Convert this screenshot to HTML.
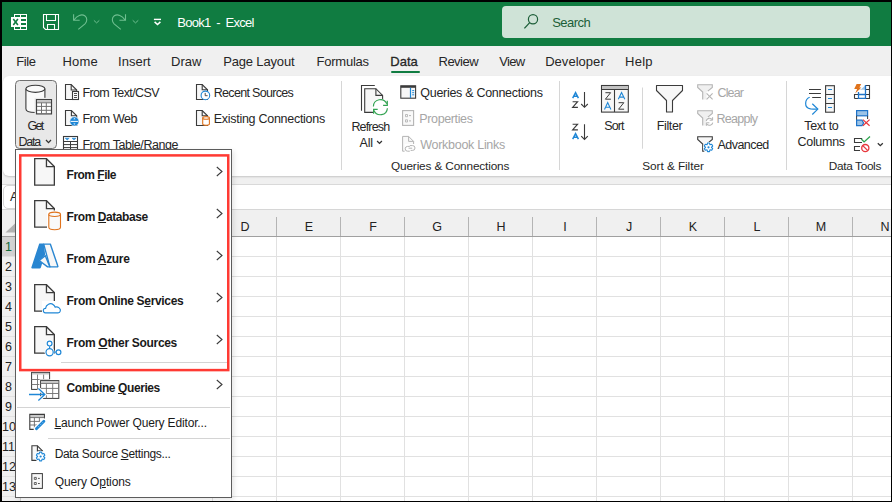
<!DOCTYPE html>
<html><head><meta charset="utf-8"><style>
*{margin:0;padding:0;box-sizing:border-box}
html,body{width:892px;height:502px;overflow:hidden;background:#fff}
body{position:relative;font-family:"Liberation Sans",sans-serif}
.a{position:absolute}
.t{position:absolute;white-space:pre;line-height:1;z-index:3}
.t u{text-decoration:underline;text-underline-offset:0.5px;text-decoration-thickness:1px}
.ch{position:absolute;top:214px;margin-left:1px;width:64px;height:27px;text-align:center;font-size:12.5px;line-height:27px;color:#222}
.vl{position:absolute;top:237px;width:1px;height:270px;background:#e1e1e1}
.hs{position:absolute;top:217px;width:1px;height:19px;background:#b4b4b4}
.hl{position:absolute;left:2px;width:890px;height:1px;background:#e1e1e1}
.rh{position:absolute;left:2px;width:13px;height:19px;font-size:12.5px;line-height:20px;text-align:center;color:#222}
.rh.sel{color:#0f6b39}
.rhc{position:absolute;left:2px;top:237px;width:18px;height:270px;background:#f0f0f0}
.gsep{position:absolute;top:81px;width:1px;height:89px;background:#d6d6d6}
#menu{position:absolute;left:15px;top:149px;width:217px;height:349px;background:#fff;border:1px solid #5c5c5c;z-index:10;box-shadow:2px 2px 5px rgba(0,0,0,0.10)}
#msvg{position:absolute;left:0;top:0;z-index:11}
.mt .t{z-index:12}
.msep{position:absolute;height:1px;background:#d4d4d4;z-index:11}
#red{position:absolute;left:19px;top:154px;width:211px;height:218px;border:2px solid #ff3535;box-shadow:inset 0 0 0 1px rgba(255,70,70,0.45);z-index:13}
.bd{position:absolute;background:#000;z-index:30}
</style></head><body>
<div class="a" style="left:0;top:0;width:892px;height:46px;background:#107c41"></div>
<div class="a" style="left:502px;top:6px;width:368px;height:32px;background:#cfe3d7;border-radius:4px"></div>
<div class="a" style="left:0;top:46px;width:892px;height:139px;background:#f0f0f0"></div>
<div class="a" style="left:391px;top:71px;width:29px;height:2px;background:#107c41;border-radius:1px"></div>
<div class="a" style="left:3px;top:76px;width:900px;height:100px;background:#fff;border-radius:6px 0 0 6px;box-shadow:0 1px 2px rgba(0,0,0,0.18)"></div>
<div class="a" style="left:0;top:184px;width:892px;height:1px;background:#d9d9d9"></div>
<div class="a" style="left:0;top:185px;width:892px;height:24px;background:#fff"></div>
<div class="a" style="left:3px;top:185px;width:60px;height:24px;border:1px solid #d6d6d6;border-radius:5px;background:#fff"></div>
<div class="a" style="left:10px;top:190px;font-size:12.5px;line-height:14px;color:#222">A1</div>
<div class="a" style="left:0;top:209px;width:892px;height:1px;background:#d6d6d6"></div>
<div class="a" style="left:0;top:210px;width:892px;height:26px;background:#f0f0f0"></div>
<div class="a" style="left:0;top:236px;width:892px;height:1px;background:#a0a0a0"></div>
<svg class="a" style="left:0;top:0" width="30" height="240"><path d="M15,223.5 V232.5 H5.5 Z" fill="#b2b2b2"/></svg>
<div class="gsep" style="left:341px"></div><div class="gsep" style="left:559px"></div><div class="gsep" style="left:786px"></div>
<div class="ch" style="left:212px">D</div><div class="ch" style="left:276px">E</div><div class="ch" style="left:340px">F</div><div class="ch" style="left:404px">G</div><div class="ch" style="left:468px">H</div><div class="ch" style="left:532px">I</div><div class="ch" style="left:596px">J</div><div class="ch" style="left:660px">K</div><div class="ch" style="left:724px">L</div><div class="ch" style="left:788px">M</div><div class="ch" style="left:852px">N</div>
<div class="vl" style="left:212px"></div><div class="hs" style="left:212px"></div><div class="vl" style="left:276px"></div><div class="hs" style="left:276px"></div><div class="vl" style="left:340px"></div><div class="hs" style="left:340px"></div><div class="vl" style="left:404px"></div><div class="hs" style="left:404px"></div><div class="vl" style="left:468px"></div><div class="hs" style="left:468px"></div><div class="vl" style="left:532px"></div><div class="hs" style="left:532px"></div><div class="vl" style="left:596px"></div><div class="hs" style="left:596px"></div><div class="vl" style="left:660px"></div><div class="hs" style="left:660px"></div><div class="vl" style="left:724px"></div><div class="hs" style="left:724px"></div><div class="vl" style="left:788px"></div><div class="hs" style="left:788px"></div><div class="vl" style="left:852px"></div><div class="hs" style="left:852px"></div>
<div class="rhc"></div>
<div class="a" style="left:2px;top:237px;width:18px;height:19px;background:#d2d2d2"></div>
<div class="hl" style="top:256px"></div><div class="hl" style="top:276px"></div><div class="hl" style="top:296px"></div><div class="hl" style="top:316px"></div><div class="hl" style="top:336px"></div><div class="hl" style="top:356px"></div><div class="hl" style="top:376px"></div><div class="hl" style="top:396px"></div><div class="hl" style="top:416px"></div><div class="hl" style="top:436px"></div><div class="hl" style="top:456px"></div><div class="hl" style="top:476px"></div><div class="hl" style="top:496px"></div>
<div class="rh sel" style="top:237px">1</div><div class="rh" style="top:257px">2</div><div class="rh" style="top:277px">3</div><div class="rh" style="top:297px">4</div><div class="rh" style="top:317px">5</div><div class="rh" style="top:337px">6</div><div class="rh" style="top:357px">7</div><div class="rh" style="top:377px">8</div><div class="rh" style="top:397px">9</div><div class="rh" style="top:417px">10</div><div class="rh" style="top:437px">11</div><div class="rh" style="top:457px">12</div><div class="rh" style="top:477px">13</div>
<div class="a" style="left:20px;top:237px;width:1px;height:270px;background:#d4d4d4"></div>
<svg class="a" style="left:0;top:0;z-index:2" width="892" height="502"><rect x="14" y="14" width="13" height="16" fill="#ffffff"/><rect x="15" y="15" width="5" height="2" fill="#107c41"/><rect x="21" y="15" width="5" height="2" fill="#107c41"/><rect x="21" y="19" width="5" height="2" fill="#107c41"/><rect x="21" y="23" width="5" height="2" fill="#107c41"/><rect x="15" y="27" width="5" height="2" fill="#107c41"/><rect x="21" y="27" width="5" height="2" fill="#107c41"/><rect x="11" y="17" width="10" height="10" fill="#ffffff"/><path d="M13.3,18.9 L17.9,25 M17.9,18.9 L13.3,25" stroke="#107c41" stroke-width="1.6"/><path d="M43.5,14.5 H58.5 V29.5 H45.5 L43.5,27.5 Z M46.5,14.5 V20.5 H55.5 V14.5 M47.5,29.5 V24.5 H54.5 V29.5" fill="none" stroke="#ffffff" stroke-width="1.1"/><path d="M73.6,14.3 V20.3 H79.7 M74.2,19.8 C77,15.8 81.5,13.6 84.8,15.8 C87.6,17.8 87.2,21.6 85,23.8 L78.3,29.4" fill="none" stroke="#6fbe90" stroke-width="1.1"/><path d="M93.9,20.4 L96.6,22.9 L99.3,20.4" fill="none" stroke="#6fbe90" stroke-width="1"/><g transform="translate(199.1,0) scale(-1,1)"><path d="M73.6,14.3 V20.3 H79.7 M74.2,19.8 C77,15.8 81.5,13.6 84.8,15.8 C87.6,17.8 87.2,21.6 85,23.8 L78.3,29.4" fill="none" stroke="#6fbe90" stroke-width="1.1"/></g><path d="M132.7,20.3 L135.5,22.9 L138.3,20.3" fill="none" stroke="#6fbe90" stroke-width="1"/><path d="M153.9,19.4 H161" stroke="#ffffff" stroke-width="1.4"/><path d="M154.6,21.9 L157.5,24.6 L160.4,21.9" fill="none" stroke="#ffffff" stroke-width="1.5"/><circle cx="533" cy="19.3" r="4.6" fill="none" stroke="#1c5e38" stroke-width="1.2"/><path d="M529.7,22.6 L524.4,28.4" stroke="#1c5e38" stroke-width="1.3"/><rect x="15.5" y="80.5" width="41" height="68" rx="4" fill="#e8e8e8" stroke="#707070" stroke-width="1"/><path d="M25.9,88.8 V108.8 C25.9,113.8 44.9,113.8 44.9,108.8 V88.8" fill="#fafafa" stroke="#3b3b3b" stroke-width="1.1"/><ellipse cx="35.4" cy="88.8" rx="9.5" ry="3.6" fill="#fafafa" stroke="#3b3b3b" stroke-width="1.1"/><rect x="34.6" y="97.8" width="18.6" height="17.8" fill="#e9e9e9"/><rect x="36.5" y="99.6" width="15" height="14.3" fill="#fff" stroke="#404040" stroke-width="1.2"/><rect x="37.1" y="100.2" width="13.8" height="2.2" fill="#c4c4c4"/><path d="M37,102.8 H51 M37,106.4 H51 M37,110.3 H51 M41.5,102.8 V113.8 M46.3,102.8 V113.8" stroke="#707070" stroke-width="1"/><path d="M46,140 L48.5,142.6 L51,140" fill="none" stroke="#333" stroke-width="1.3"/><path d="M65.5,84.5 H71.2 L76.7,90.0 V99.5 H65.5 Z" fill="#f7f7f7" stroke="#3b3b3b" stroke-width="1.1" stroke-linejoin="miter"/><path d="M71.2,84.5 V90.0 H76.7" fill="none" stroke="#3b3b3b" stroke-width="1.1"/><rect x="72.5" y="91.5" width="6" height="8" fill="#fff" stroke="#3b3b3b" stroke-width="1.1"/><path d="M74,93.5 H77 M74,95.5 H77 M74,97.5 H77" stroke="#3b3b3b" stroke-width="0.9"/><path d="M65.5,110.5 H71.4 L76.7,115.8 V125.5 H65.5 Z" fill="#f7f7f7" stroke="#3b3b3b" stroke-width="1.1" stroke-linejoin="miter"/><path d="M71.4,110.5 V115.8 H76.7" fill="none" stroke="#3b3b3b" stroke-width="1.1"/><circle cx="74.4" cy="121.4" r="4.6" fill="#1f87d6" stroke="#fff" stroke-width="0.6"/><path d="M70.6,121.4 H78.2" stroke="#fff" stroke-width="1"/><path d="M73.3,119.2 L74.4,118 L75.5,119.2 Z M73.3,123.6 L74.4,124.8 L75.5,123.6 Z" fill="#fff"/><rect x="63.5" y="136.5" width="14" height="14" fill="#fff" stroke="#3b3b3b" stroke-width="1.1"/><path d="M63.5,141.5 H77.5 M63.5,144.6 H77.5 M63.5,147.6 H77.5 M70.5,141.5 V150" stroke="#3b3b3b" stroke-width="1"/><path d="M65.2,138.2 H69.2 L67.2,140.1 Z M72,138.2 H76 L74,140.1 Z" fill="#1f87d6" stroke="#1f87d6" stroke-width="0.5" stroke-linejoin="round"/><path d="M196.5,84.5 H202.2 L207.5,89.8 V99.5 H196.5 Z" fill="#f7f7f7" stroke="#3b3b3b" stroke-width="1.1" stroke-linejoin="miter"/><path d="M202.2,84.5 V89.8 H207.5" fill="none" stroke="#3b3b3b" stroke-width="1.1"/><circle cx="205.4" cy="95.4" r="4.3" fill="#fff" stroke="#1f87d6" stroke-width="1.1"/><path d="M205.2,92.9 V95.7 H207.6" fill="none" stroke="#3b3b3b" stroke-width="0.9"/><path d="M196.5,110.5 H202.2 L207.5,115.8 V125.5 H196.5 Z" fill="#f7f7f7" stroke="#3b3b3b" stroke-width="1.1" stroke-linejoin="miter"/><path d="M202.2,110.5 V115.8 H207.5" fill="none" stroke="#3b3b3b" stroke-width="1.1"/><path d="M202.7,117.8 V124 C202.7,125.6 209.4,125.6 209.4,124 V117.8" fill="#fff" stroke="#e0731c" stroke-width="1.1"/><ellipse cx="206.05" cy="117.9" rx="3.35" ry="1.3" fill="#fff" stroke="#e0731c" stroke-width="1.1"/><path d="M361.5,110.7 V85.5 H374.8" fill="none" stroke="#3b3b3b" stroke-width="1.1"/><path d="M364.7,88.7 H375.9 L382.6,95.4 V112.4 H364.7 Z" fill="#f7f7f7" stroke="#3b3b3b" stroke-width="1.1"/><path d="M375.9,88.7 V95.4 H382.6" fill="none" stroke="#3b3b3b" stroke-width="1.1"/><circle cx="380.4" cy="107.2" r="8.6" fill="#fff"/><path d="M373.4,106.5 A7,7 0 0 1 386.8,103.8 M387.4,108.2 A7,7 0 0 1 374,110.5" fill="none" stroke="#33a352" stroke-width="1.2"/><path d="M387.3,100.8 V105.3 H383.1 M373.6,113.8 V109.3 H377.7" fill="none" stroke="#33a352" stroke-width="1.2"/><path d="M377.1,141 L379.5,143.4 L381.9,141" fill="none" stroke="#333" stroke-width="1.3"/><rect x="400.8" y="85.8" width="14.8" height="12.4" fill="#f7f7f7" stroke="#3b3b3b" stroke-width="1.1"/><path d="M400.8,86.8 H415.6" stroke="#3b3b3b" stroke-width="2"/><path d="M410.5,87.8 V98" stroke="#1f87d6" stroke-width="1.2"/><path d="M412.2,90.6 H414.2 M412.2,92.7 H414.2 M412.2,94.8 H414.2" stroke="#1f87d6" stroke-width="1"/><rect x="402.6" y="110.6" width="11" height="14.8" fill="#f9f9f9" stroke="#b4b4b4" stroke-width="1.1"/><path d="M405.5,114.5 h2 v2.2 h-2 Z M405.5,119.8 h2 v2.2 h-2 Z" fill="none" stroke="#b4b4b4" stroke-width="0.9"/><path d="M409,115.6 H411 M409,120.9 H411" stroke="#b4b4b4" stroke-width="1"/><path d="M402.6,136.4 H408.6 L413.6,141.4 V151.20000000000002 H402.6 Z" fill="#f9f9f9" stroke="#b4b4b4" stroke-width="1" stroke-linejoin="miter"/><path d="M408.6,136.4 V141.4 H413.6" fill="none" stroke="#b4b4b4" stroke-width="1"/><rect x="404.6" y="144" width="12" height="8.4" fill="#fff"/><path d="M409.8,145.6 H412.6 A2.4,2.4 0 0 1 412.6,150.4 H410.6 M409.8,151.2 H407.6 A2.4,2.4 0 0 1 407.6,146.4 H409.8" fill="none" stroke="#b4b4b4" stroke-width="1"/><path d="M408.6,148.2 H412.2" stroke="#b4b4b4" stroke-width="1"/><path d="M572.7,98.1 L575.55,92.6 L578.4,98.1 M573.95,96.34 H577.15" fill="none" stroke="#1f87d6" stroke-width="1.5"/><path d="M572.6,101.7 H577.6 L572.6,107.4 H577.9" fill="none" stroke="#3b3b3b" stroke-width="1.1"/><path d="M584.5,92.1 V107.3 M581.2,104 L584.5,107.3 L587.8,104" fill="none" stroke="#3b3b3b" stroke-width="1.1"/><path d="M572.6,124.2 H577.6 L572.6,129.9 H577.9" fill="none" stroke="#3b3b3b" stroke-width="1.1"/><path d="M572.7,139.1 L575.55,133.6 L578.4,139.1 M573.95,137.34 H577.15" fill="none" stroke="#1f87d6" stroke-width="1.5"/><path d="M584.5,124.2 V139.4 M581.2,136.1 L584.5,139.4 L587.8,136.1" fill="none" stroke="#3b3b3b" stroke-width="1.1"/><rect x="601.5" y="85.5" width="26.8" height="26.6" fill="#f7f7f7" stroke="#3b3b3b" stroke-width="1.1"/><rect x="602" y="86" width="25.8" height="3" fill="#c2c2c2"/><path d="M601.5,89.5 H628.3 M614.5,89.5 V112" stroke="#3b3b3b" stroke-width="1.1"/><path d="M605.4,92.7 H610.6 L605.4,99.2 H610.9" fill="none" stroke="#3b3b3b" stroke-width="1.0"/><path d="M604.5,109.4 L607.7,102.6 L610.9,109.4 M605.91,107.22 H609.49" fill="none" stroke="#1f87d6" stroke-width="1.1"/><path d="M618.3,99.3 L621.55,92.5 L624.8,99.3 M619.73,97.12 H623.37" fill="none" stroke="#1f87d6" stroke-width="1.1"/><path d="M618.6,102.7 H623.8 L618.6,109.2 H624.0999999999999" fill="none" stroke="#3b3b3b" stroke-width="1.0"/><path d="M642.5,87.5 V148.7" stroke="#d6d6d6" stroke-width="1"/><path d="M656.5,85.5 H682.5 V90.5 L672.5,100.5 V112 H666.5 V100.5 L656.5,90.5 Z" fill="#f7f7f7" stroke="#3b3b3b" stroke-width="1.1" stroke-linejoin="round"/><path d="M697.7,84.8 H712.3 V87.5 L706.5,92.1 V99.39999999999999 H702.7 V92.1 L697.7,87.5 Z" fill="#f0f0f0"/><path d="M702.7,99.39999999999999 V92.1 L697.7,87.5 V84.8 H712.3 V87.5 L707.8,91.2" fill="none" stroke="#b4b4b4" stroke-width="1.1"/><path d="M706.6,93.4 L712.6,99.4 M712.6,93.4 L706.6,99.4" stroke="#b4b4b4" stroke-width="1.1"/><path d="M697.7,110.8 H712.3 V113.5 L706.5,118.1 V125.39999999999999 H702.7 V118.1 L697.7,113.5 Z" fill="#f0f0f0"/><path d="M702.7,125.39999999999999 V118.1 L697.7,113.5 V110.8 H712.3 V113.5 L707.8,117.2" fill="none" stroke="#b4b4b4" stroke-width="1.1"/><path d="M706.2,121 A3.4,3.4 0 0 1 712.2,119.6 M712.8,122.6 A3.4,3.4 0 0 1 706.8,124" fill="none" stroke="#b4b4b4" stroke-width="1.1"/><path d="M712.6,117.2 V120.2 H709.6 M706.4,125.8 V122.8 H709.4" fill="none" stroke="#b4b4b4" stroke-width="1"/><path d="M697.7,136.7 H712.3 V139.39999999999998 L706.5,144.0 V151.29999999999998 H702.7 V144.0 L697.7,139.39999999999998 Z" fill="#f7f7f7"/><path d="M704.3,151.29999999999998 H702.7 V144.0 L697.7,139.39999999999998 V136.7 H712.3 V139.39999999999998 L707.8,143.1" fill="none" stroke="#3b3b3b" stroke-width="1.1"/><circle cx="708.5" cy="147.3" r="5.4" fill="#fff"/><polygon points="709.95,144.79 709.49,143.01 707.51,143.01 707.05,144.79 705.28,144.30 704.29,146.01 705.60,147.30 704.29,148.59 705.28,150.30 707.05,149.81 707.51,151.59 709.49,151.59 709.95,149.81 711.72,150.30 712.71,148.59 711.40,147.30 712.71,146.01 711.72,144.30" fill="#fff" stroke="#1f87d6" stroke-width="1.1" stroke-linejoin="round"/><circle cx="708.5" cy="147.3" r="1.10" fill="#1f87d6"/><path d="M809,89.5 H820.9 M809,93.5 H820.9 M812.2,97.5 H820.9" stroke="#3b3b3b" stroke-width="1.1"/><rect x="825.6" y="85.7" width="8.8" height="26.5" fill="#f7f7f7" stroke="#3b3b3b" stroke-width="1.1"/><path d="M825.6,94.5 H834.4 M825.6,103.5 H834.4" stroke="#3b3b3b" stroke-width="1.1"/><path d="M828,89.5 H832 M828,98.5 H832 M828,107.5 H832" stroke="#1f87d6" stroke-width="1.2"/><path d="M809.7,97.3 C805,99 803.3,107.6 810.6,108.9 C812.5,109.1 815,109.1 817.6,109.1" fill="none" stroke="#1f87d6" stroke-width="1.2"/><path d="M812.3,103.8 L817.8,109.1 L812.3,114.5" fill="none" stroke="#1f87d6" stroke-width="1.2"/><path d="M854.5,98.5 V94.5 H858.5 M865.5,85.5 H869.5 V98.5 H854.5 M865.5,89.5 H869.5 M865.5,94.5 H869.5" fill="none" stroke="#3b3b3b" stroke-width="1.1"/><path d="M858.5,89.5 H865.5" stroke="#e2e2e2" stroke-width="1"/><path d="M860.8,89.6 L865.2,85.4 V89.6 Z" fill="#9cc6ea"/><path d="M858.5,92 V98.4 H865.5 V85 M858.5,94.5 H865.5" fill="none" stroke="#1f73c8" stroke-width="1.3"/><path d="M856.6,84 H861.2 L859.4,87.4 H861.3 L855.2,93.4 L857.1,88.9 H854.2 Z" fill="#e0731c"/><rect x="856.6" y="110.6" width="11" height="5.2" fill="#9cc3e6" stroke="#1f73c8" stroke-width="1.2"/><path d="M856.6,115.8 V120 M867.6,115.8 V119" stroke="#3b3b3b" stroke-width="1"/><path d="M856.6,120.2 H862 L863.6,123 L862,125.6 H856.6 Z" fill="#9cc3e6" stroke="#1f73c8" stroke-width="1.2"/><path d="M862.9,119.6 L869.6,125.8 M869.6,119.6 L862.9,125.8" stroke="#e8383d" stroke-width="1.2"/><path d="M862.2,138.5 H854.5 V142.5 H862 M860,146.5 H854.5 V150.5 H860" fill="none" stroke="#3b3b3b" stroke-width="1.1"/><path d="M861.3,139 L864.1,141.9 L870,136.4" fill="none" stroke="#2fa44f" stroke-width="1.3"/><circle cx="865.3" cy="148.1" r="3.6" fill="#fff" stroke="#e8383d" stroke-width="1.3"/><path d="M862.8,145.6 L867.8,150.6" stroke="#e8383d" stroke-width="1.3"/><path d="M877.8,143.2 L880.3,145.7 L882.8,143.2" fill="none" stroke="#333" stroke-width="1.3"/></svg>
<div class="t" style="left:177.20px;top:16.39px;font-size:13px;font-weight:normal;color:#ffffff;letter-spacing:-0.724px;">Book1  -  Excel</div>
<div class="t" style="left:552.20px;top:16.39px;font-size:13px;font-weight:normal;color:#1c5e38;letter-spacing:-0.532px;">Search</div>
<div class="t" style="left:16.30px;top:54.69px;font-size:13px;font-weight:normal;color:#262626;letter-spacing:-0.406px;">File</div>
<div class="t" style="left:62.40px;top:54.69px;font-size:13px;font-weight:normal;color:#262626;letter-spacing:0.184px;">Home</div>
<div class="t" style="left:118.00px;top:54.69px;font-size:13px;font-weight:normal;color:#262626;letter-spacing:0.020px;">Insert</div>
<div class="t" style="left:171.00px;top:54.69px;font-size:13px;font-weight:normal;color:#262626;letter-spacing:0.018px;">Draw</div>
<div class="t" style="left:223.20px;top:54.69px;font-size:13px;font-weight:normal;color:#262626;letter-spacing:-0.159px;">Page Layout</div>
<div class="t" style="left:316.60px;top:54.69px;font-size:13px;font-weight:normal;color:#262626;letter-spacing:-0.254px;">Formulas</div>
<div class="t" style="left:390.30px;top:54.69px;font-size:13px;font-weight:normal;color:#262626;letter-spacing:-0.010px;-webkit-text-stroke:0.3px #262626;">Data</div>
<div class="t" style="left:438.50px;top:54.69px;font-size:13px;font-weight:normal;color:#262626;letter-spacing:-0.507px;">Review</div>
<div class="t" style="left:499.30px;top:54.69px;font-size:13px;font-weight:normal;color:#262626;letter-spacing:-0.685px;">View</div>
<div class="t" style="left:545.20px;top:54.69px;font-size:13px;font-weight:normal;color:#262626;letter-spacing:0.034px;">Developer</div>
<div class="t" style="left:625.00px;top:54.69px;font-size:13px;font-weight:normal;color:#262626;letter-spacing:0.265px;">Help</div>
<div class="t" style="left:27.60px;top:120.32px;font-size:12.5px;font-weight:normal;color:#262626;letter-spacing:-1.737px;">Get</div>
<div class="t" style="left:18.40px;top:136.32px;font-size:12.5px;font-weight:normal;color:#262626;letter-spacing:-1.217px;">Data</div>
<div class="t" style="left:82.40px;top:86.72px;font-size:12.5px;font-weight:normal;color:#262626;letter-spacing:-0.616px;">From Text/CSV</div>
<div class="t" style="left:82.40px;top:112.92px;font-size:12.5px;font-weight:normal;color:#262626;letter-spacing:-0.423px;">From Web</div>
<div class="t" style="left:82.40px;top:138.92px;font-size:12.5px;font-weight:normal;color:#262626;letter-spacing:-0.432px;">From Table/Range</div>
<div class="t" style="left:213.70px;top:86.92px;font-size:12.5px;font-weight:normal;color:#262626;letter-spacing:-0.676px;">Recent Sources</div>
<div class="t" style="left:213.70px;top:112.92px;font-size:12.5px;font-weight:normal;color:#262626;letter-spacing:-0.273px;">Existing Connections</div>
<div class="t" style="left:351.40px;top:120.52px;font-size:12.5px;font-weight:normal;color:#262626;letter-spacing:-0.836px;">Refresh</div>
<div class="t" style="left:359.50px;top:136.72px;font-size:12.5px;font-weight:normal;color:#262626;letter-spacing:-0.207px;">All</div>
<div class="t" style="left:420.30px;top:86.72px;font-size:12.5px;font-weight:normal;color:#262626;letter-spacing:-0.295px;">Queries &amp; Connections</div>
<div class="t" style="left:419.30px;top:112.92px;font-size:12.5px;font-weight:normal;color:#a6a6a6;letter-spacing:-0.369px;">Properties</div>
<div class="t" style="left:420.30px;top:138.92px;font-size:12.5px;font-weight:normal;color:#a6a6a6;letter-spacing:-0.288px;">Workbook Links</div>
<div class="t" style="left:391.00px;top:161.11px;font-size:11.8px;font-weight:normal;color:#262626;letter-spacing:-0.146px;">Queries &amp; Connections</div>
<div class="t" style="left:604.30px;top:119.72px;font-size:12.5px;font-weight:normal;color:#262626;letter-spacing:-0.951px;">Sort</div>
<div class="t" style="left:656.80px;top:119.52px;font-size:12.5px;font-weight:normal;color:#262626;letter-spacing:-0.383px;">Filter</div>
<div class="t" style="left:717.50px;top:86.82px;font-size:12.5px;font-weight:normal;color:#a6a6a6;letter-spacing:-0.852px;">Clear</div>
<div class="t" style="left:716.50px;top:112.92px;font-size:12.5px;font-weight:normal;color:#a6a6a6;letter-spacing:-0.735px;">Reapply</div>
<div class="t" style="left:717.50px;top:138.72px;font-size:12.5px;font-weight:normal;color:#262626;letter-spacing:-0.549px;">Advanced</div>
<div class="t" style="left:642.30px;top:161.11px;font-size:11.8px;font-weight:normal;color:#262626;letter-spacing:-0.062px;">Sort &amp; Filter</div>
<div class="t" style="left:804.30px;top:119.72px;font-size:12.5px;font-weight:normal;color:#262626;letter-spacing:-0.395px;">Text to</div>
<div class="t" style="left:797.50px;top:135.62px;font-size:12.5px;font-weight:normal;color:#262626;letter-spacing:-0.295px;">Columns</div>
<div class="t" style="left:828.80px;top:161.11px;font-size:11.8px;font-weight:normal;color:#262626;letter-spacing:-0.337px;">Data Tools</div>
<div id="menu"></div>
<svg id="msvg" width="892" height="502"><path d="M34.7,158.7 H46.45 L54.35,166.6 V185.1 H34.7 Z" fill="#f7f7f7" stroke="#3b3b3b" stroke-width="1.3" stroke-linejoin="miter"/><path d="M46.45,158.7 V166.6 H54.35" fill="none" stroke="#3b3b3b" stroke-width="1.3"/><path d="M34.7,200.7 H46.45 L54.35,208.6 V227.1 H34.7 Z" fill="#f7f7f7" stroke="#3b3b3b" stroke-width="1.3" stroke-linejoin="miter"/><path d="M46.45,200.7 V208.6 H54.35" fill="none" stroke="#3b3b3b" stroke-width="1.3"/><path d="M34.7,284.7 H46.45 L54.35,292.59999999999997 V311.09999999999997 H34.7 Z" fill="#f7f7f7" stroke="#3b3b3b" stroke-width="1.3" stroke-linejoin="miter"/><path d="M46.45,284.7 V292.59999999999997 H54.35" fill="none" stroke="#3b3b3b" stroke-width="1.3"/><path d="M34.7,326.7 H46.45 L54.35,334.59999999999997 V353.09999999999997 H34.7 Z" fill="#f7f7f7" stroke="#3b3b3b" stroke-width="1.3" stroke-linejoin="miter"/><path d="M46.45,326.7 V334.59999999999997 H54.35" fill="none" stroke="#3b3b3b" stroke-width="1.3"/><rect x="47" y="210.5" width="15.5" height="20" fill="#fff"/><path d="M48.8,214.3 V227.2 C48.8,230.5 60.5,230.5 60.5,227.2 V214.3" fill="#f9f9f9" stroke="#e0731c" stroke-width="1.1"/><ellipse cx="54.65" cy="214.3" rx="5.85" ry="2.2" fill="#f9f9f9" stroke="#e0731c" stroke-width="1.1"/><path d="M43.7,244.1 H50.3 L57.8,265.9 Q58.2,266.9 57.1,266.9 H49.9 Z" fill="#f7f7f7" stroke="#2986d1" stroke-width="1.4" stroke-linejoin="round"/><path d="M39.2,260.5 L45.3,255.7 L49.9,266.9 H47.6 Z" fill="#f7f7f7" stroke="#2986d1" stroke-width="1.4" stroke-linejoin="round"/><path d="M39.4,243.5 H43.8 L45.2,254.8 L43.9,256.6 L38.8,260.6 L42.2,263.2 L40.9,267.6 Q40.6,268.5 39.6,268.5 H32.3 Q31,268.5 31.4,267.2 L39,244.2 Q39.2,243.5 39.4,243.5 Z" fill="#2986d1"/><rect x="42" y="301" width="20" height="14" fill="#fff"/><path d="M45.4,312.8 C42.6,312.8 42.6,308.2 45.6,308.3 C46,304.5 50.3,302.2 53.6,305 C54.3,305.6 54.8,306.3 55.1,307.1 C58.2,306.4 61,308.6 60.3,311 C60.1,312 59.2,312.8 58.1,312.8 Z" fill="#fff" stroke="#1f87d6" stroke-width="1.2"/><circle cx="49.6" cy="343.6" r="3.8" fill="#fff"/><circle cx="49.6" cy="352.2" r="5" fill="#fff"/><circle cx="58.5" cy="352.2" r="3.8" fill="#fff"/><rect x="48" y="345" width="3.2" height="5" fill="#fff"/><path d="M49.6,346.3 V348.6 M53.7,352.2 H55.9" stroke="#1f87d6" stroke-width="1.2"/><circle cx="49.6" cy="343.6" r="2.4" fill="#fff" stroke="#1f87d6" stroke-width="1.2"/><circle cx="49.6" cy="352.2" r="3.6" fill="#fff" stroke="#1f87d6" stroke-width="1.2"/><circle cx="58.5" cy="352.2" r="2.4" fill="#fff" stroke="#1f87d6" stroke-width="1.2"/><rect x="31.6" y="372.4" width="18" height="17" fill="#fff" stroke="#3b3b3b" stroke-width="1"/><rect x="32.1" y="372.9" width="17" height="1.6" fill="#c4c4c4"/><path d="M31.6,379.5 H49.6 M31.6,384.5 H40 M37.5,374.6 V389.4 M43.6,374.6 V380" stroke="#707070" stroke-width="0.9"/><rect x="39.4" y="379.4" width="20.6" height="20.2" fill="#fff"/><rect x="40.6" y="380.6" width="18.2" height="17.8" fill="#fff" stroke="#3b3b3b" stroke-width="1"/><rect x="41.1" y="381.1" width="17.2" height="2.3" fill="#c4c4c4"/><path d="M40.6,383.5 H58.8 M40.6,388.4 H58.8 M40.6,393.5 H58.8 M46.4,383.5 V398.4 M52.7,383.5 V398.4" stroke="#707070" stroke-width="0.9"/><path d="M38.4,388.6 L44.8,394.5 L38.4,400.4" fill="none" stroke="#fff" stroke-width="3.4"/><path d="M29,394.5 H44.6 M38.4,388.6 L44.8,394.5 L38.4,400.4" fill="none" stroke="#1f87d6" stroke-width="1.3"/><rect x="30.4" y="415" width="13.4" height="2.4" fill="#c9c9c9"/><path d="M36.5,429.4 H29.8 V414.4 H44.4 V420" fill="none" stroke="#3b3b3b" stroke-width="1.1"/><path d="M29.8,417.6 H44.4 M29.8,421.4 H41 M29.8,425 H37 M34.4,417.6 V429.4 M39.4,417.6 V422.5" stroke="#6a6a6a" stroke-width="0.9"/><path d="M36.4,428.8 L43.9,421.2" stroke="#fff" stroke-width="5.4" stroke-linecap="round"/><path d="M36.4,428.8 L43.9,421.2" stroke="#1f87d6" stroke-width="2.8" stroke-linecap="round"/><path d="M38.3,426.9 L38.8,426.4 M40.2,425 L40.7,424.5 M42.1,423.1 L42.6,422.6" stroke="#fff" stroke-width="0.8"/><path d="M31.9,445.8 H37.4 L42.5,450.90000000000003 V460.40000000000003 H31.9 Z" fill="#f7f7f7" stroke="#3b3b3b" stroke-width="1.1" stroke-linejoin="miter"/><path d="M37.4,445.8 V450.90000000000003 H42.5" fill="none" stroke="#3b3b3b" stroke-width="1.1"/><circle cx="40.6" cy="456.5" r="5.8" fill="#fff"/><polygon points="42.09,453.93 41.61,452.12 39.59,452.12 39.12,453.93 37.31,453.43 36.30,455.18 37.63,456.50 36.30,457.82 37.31,459.57 39.12,459.07 39.59,460.88 41.61,460.88 42.09,459.07 43.89,459.57 44.90,457.82 43.57,456.50 44.90,455.18 43.89,453.43" fill="#fff" stroke="#1f87d6" stroke-width="1.1" stroke-linejoin="round"/><circle cx="40.6" cy="456.5" r="1.12" fill="#1f87d6"/><rect x="31.8" y="473.6" width="10.6" height="14.8" fill="#f7f7f7" stroke="#3b3b3b" stroke-width="1"/><path d="M34.3,477.4 h2 v2 h-2 Z M34.3,482.5 h2 v2 h-2 Z" fill="none" stroke="#555" stroke-width="0.9"/><path d="M38,478.4 H39.8 M38,483.5 H39.8" stroke="#555" stroke-width="1"/><path d="M216.8,167.0 L222,171.5 L216.8,176.0" fill="none" stroke="#3b3b3b" stroke-width="1.1"/><path d="M216.8,209.0 L222,213.5 L216.8,218.0" fill="none" stroke="#3b3b3b" stroke-width="1.1"/><path d="M216.8,251.0 L222,255.5 L216.8,260.0" fill="none" stroke="#3b3b3b" stroke-width="1.1"/><path d="M216.8,293.0 L222,297.5 L216.8,302.0" fill="none" stroke="#3b3b3b" stroke-width="1.1"/><path d="M216.8,335.0 L222,339.5 L216.8,344.0" fill="none" stroke="#3b3b3b" stroke-width="1.1"/><path d="M216.8,380.0 L222,384.5 L216.8,389.0" fill="none" stroke="#3b3b3b" stroke-width="1.1"/></svg>
<div class="msep" style="left:61px;top:362px;width:166px"></div>
<div class="msep" style="left:17px;top:407px;width:213px"></div>
<div class="msep" style="left:48px;top:438px;width:182px"></div>
<div class="mt">
<div class="t" style="left:66.60px;top:169.14px;font-size:12px;font-weight:bold;color:#1a1a1a;letter-spacing:-0.517px;">From <u>F</u>ile</div>
<div class="t" style="left:66.60px;top:211.04px;font-size:12px;font-weight:bold;color:#1a1a1a;letter-spacing:-0.427px;">From <u>D</u>atabase</div>
<div class="t" style="left:66.60px;top:253.24px;font-size:12px;font-weight:bold;color:#1a1a1a;letter-spacing:-0.333px;">From <u>A</u>zure</div>
<div class="t" style="left:66.60px;top:295.04px;font-size:12px;font-weight:bold;color:#1a1a1a;letter-spacing:-0.332px;">From Online S<u>e</u>rvices</div>
<div class="t" style="left:66.60px;top:337.34px;font-size:12px;font-weight:bold;color:#1a1a1a;letter-spacing:-0.315px;">From <u>O</u>ther Sources</div>
<div class="t" style="left:66.60px;top:381.94px;font-size:12px;font-weight:bold;color:#1a1a1a;letter-spacing:-0.406px;">Combine <u>Q</u>ueries</div>
<div class="t" style="left:54.50px;top:417.24px;font-size:12px;font-weight:normal;color:#1a1a1a;letter-spacing:-0.156px;"><u>L</u>aunch Power Query Editor...</div>
<div class="t" style="left:54.70px;top:448.34px;font-size:12px;font-weight:normal;color:#1a1a1a;letter-spacing:-0.330px;">Data Source <u>S</u>ettings...</div>
<div class="t" style="left:54.70px;top:475.84px;font-size:12px;font-weight:normal;color:#1a1a1a;letter-spacing:-0.106px;">Query O<u>p</u>tions</div>
</div>
<svg class="a" style="left:0;top:0;z-index:13" width="892" height="502"><rect x="20.25" y="155.4" width="208" height="214.7" fill="none" stroke="#ff3a33" stroke-width="2.5"/></svg>
<div class="bd" style="left:0;top:0;width:892px;height:2px"></div>
<div class="bd" style="left:0;top:0;width:2px;height:502px"></div>
<div class="bd" style="left:891px;top:0;width:1px;height:502px"></div>
<div class="bd" style="left:0;top:501px;width:892px;height:1px"></div>
</body></html>
